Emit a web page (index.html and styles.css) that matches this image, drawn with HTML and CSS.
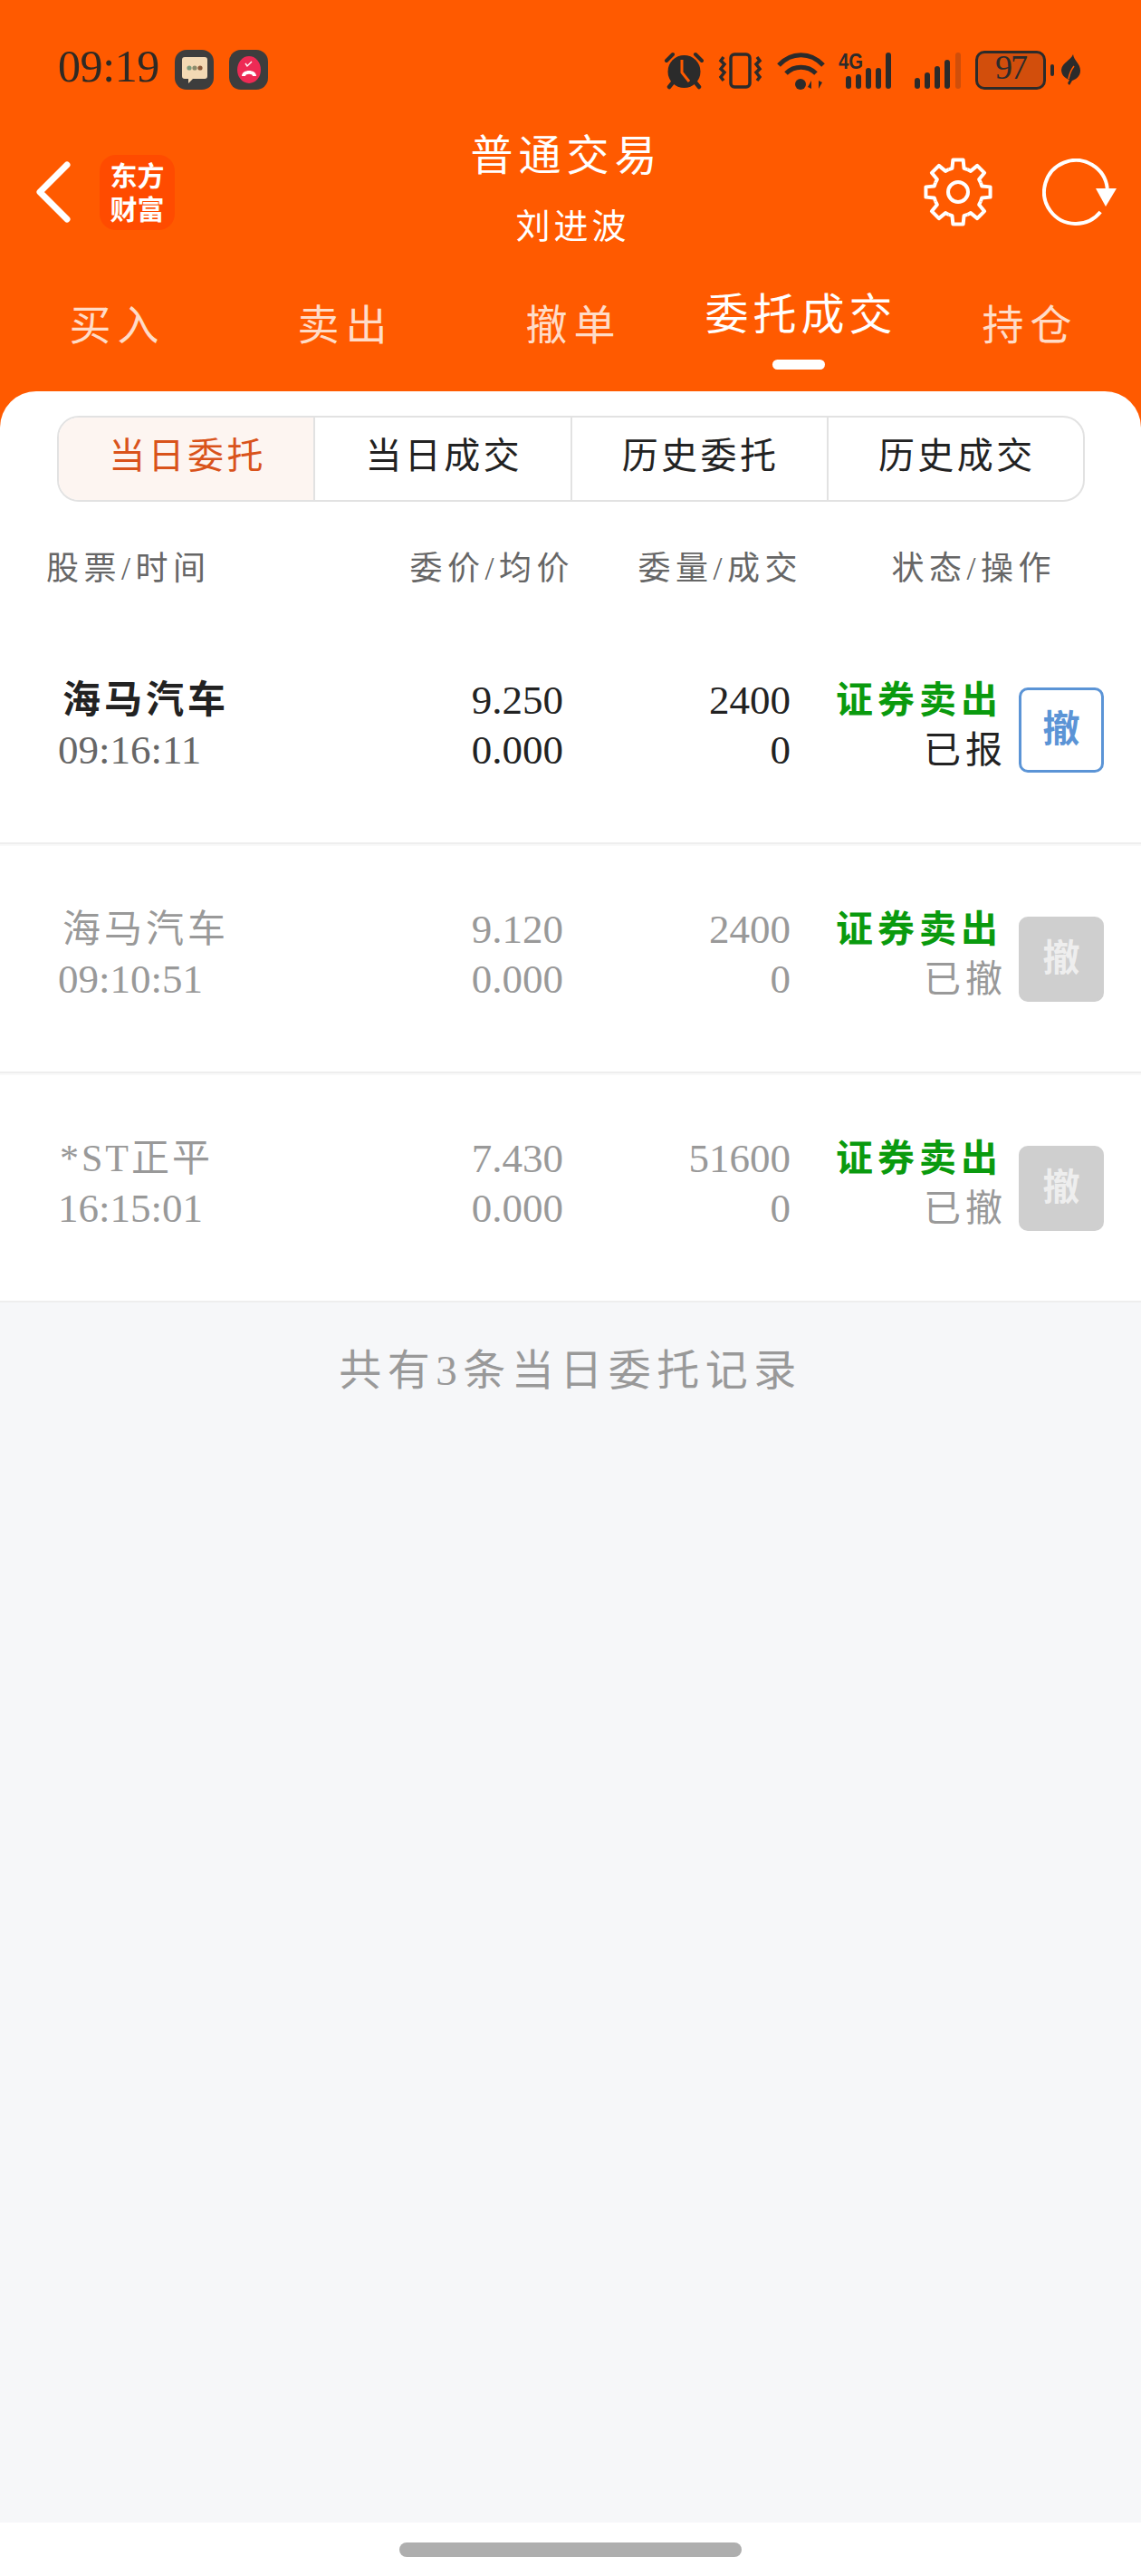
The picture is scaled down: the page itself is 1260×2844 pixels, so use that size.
FILE: index.html
```html
<!DOCTYPE html>
<html lang="zh-CN">
<head>
  <meta charset="UTF-8" />
  <meta name="viewport" content="width=device-width, initial-scale=1.0"/>
  <title>普通交易</title>
  <link rel="stylesheet" href="styles.css">
</head>
<body>

  <header class="top">
    <!-- Status bar -->
    <div class="status">
      <div class="status-left">
        <span class="clock">09:19</span>
        <span class="notice">
          <svg width="30" height="30" viewBox="0 0 30 30"><path d="M4 1h22a3 3 0 0 1 3 3v18a3 3 0 0 1-3 3H13l-5 5v-5H4a3 3 0 0 1-3-3V4a3 3 0 0 1 3-3z" fill="#f3d9b4"/><circle cx="9" cy="13" r="2.6" fill="#7d9a7b"/><circle cx="15" cy="13" r="2.6" fill="#8a8a6a"/><circle cx="21" cy="13" r="2.6" fill="#8a5a3a"/></svg>
        </span>
        <span class="notice">
          <svg width="28" height="32" viewBox="0 0 28 32"><ellipse cx="14" cy="16" rx="13" ry="15" fill="#ee2a55"/><path d="M10 9l2 3 5-5" fill="none" stroke="#fff" stroke-width="1.4"/><path d="M6 23c0-8 16-8 16 0h-4c0-3-8-3-8 0z" fill="#fff"/></svg>
        </span>
      </div>
      <div class="status-right">
        <svg width="43" height="40" viewBox="0 0 43 40"><path d="M2 9L9 2M41 9L34 2" stroke="#2b2b2b" stroke-width="4" stroke-linecap="round"/><path d="M9 33L5 38M34 33l4 5" stroke="#2b2b2b" stroke-width="4.500" stroke-linecap="round"/><circle cx="21.500" cy="21" r="18" fill="#2b2b2b"/><path d="M19 8v14l8 10" fill="none" stroke="#ff5a00" stroke-width="3"/></svg>
        <svg width="47" height="40" viewBox="0 0 47 40"><rect x="13" y="2" width="21" height="36" rx="4" fill="none" stroke="#2b2b2b" stroke-width="3.500"/><path d="M5 5l-3 4 4 4-4 5 4 4-4 5 3 4M42 5l3 4-4 4 4 5-4 4 4 5-3 4" fill="none" stroke="#2b2b2b" stroke-width="3.500"/></svg>
        <svg width="53" height="41" viewBox="0 0 53 41"><path d="M2 14c14-15 35-15 49 0" fill="none" stroke="#2b2b2b" stroke-width="5"/><path d="M10 23c9-9 24-9 33 0" fill="none" stroke="#2b2b2b" stroke-width="5"/><circle cx="26" cy="35" r="6" fill="#2b2b2b"/><path d="M38 40v-9l-4 7zM46 31v9l4-7z" fill="#2b2b2b"/></svg>
        <svg class="net" width="60" height="40" viewBox="0 0 60 40"><text x="0" y="18" class="net-text" textLength="27" lengthAdjust="spacingAndGlyphs">4G</text><rect x="8" y="26" width="6" height="14" rx="3"/><rect x="19" y="24" width="6" height="16" rx="3"/><rect x="30" y="17" width="6" height="23" rx="3"/><rect x="41" y="17" width="6" height="23" rx="3"/><rect x="52" y="0" width="6" height="40" rx="3"/></svg>
        <svg class="net signal" width="51" height="40" viewBox="0 0 51 40"><rect x="0" y="28" width="6" height="12" rx="3"/><rect x="11" y="22" width="6" height="18" rx="3"/><rect x="22" y="15" width="6" height="25" rx="3"/><rect x="33" y="8" width="6" height="32" rx="3"/><rect x="45" y="0" width="6" height="40" rx="3" fill="#d04e0a"/></svg>
        <div class="battery"><span class="battery-level">97</span><span class="battery-tip"></span></div>
        <svg width="21" height="34" viewBox="0 0 21 34"><path d="M13 0c1 7 8 10 8 18 0 7-6 10-9 11l-3 5-2-2 2-4C3 26 0 22 0 17 1 9 10 7 13 0z" fill="#2b2b2b"/><path d="M8 27c1-6 3-10 6-14" fill="none" stroke="#ff5a00" stroke-width="1.500"/></svg>
      </div>
    </div>

    <!-- Title row -->
    <div class="nav">
      <div class="nav-left">
        <svg width="38" height="68" viewBox="0 0 38 68"><path d="M34 4L4 34l30 30" fill="none" stroke="#fff" stroke-width="7" stroke-linecap="round" stroke-linejoin="round"/></svg>
        <div class="logo">东方<br>财富</div>
      </div>
      <div class="nav-title">
        <h1>普通交易</h1>
        <p>刘进波</p>
      </div>
      <div class="nav-right">
        <svg width="78" height="78" viewBox="-39 -39 78 78">
          <defs><polyline id="tooth" points="-10.33,-24.94 -6.53,-26.2 -5.63,-35.56 5.63,-35.56 6.53,-26.2 10.33,-24.94"/></defs>
          <g fill="none" stroke="#fff" stroke-width="4" stroke-linejoin="round">
            <use href="#tooth"/>
            <use href="#tooth" transform="rotate(45)"/>
            <use href="#tooth" transform="rotate(90)"/>
            <use href="#tooth" transform="rotate(135)"/>
            <use href="#tooth" transform="rotate(180)"/>
            <use href="#tooth" transform="rotate(225)"/>
            <use href="#tooth" transform="rotate(270)"/>
            <use href="#tooth" transform="rotate(315)"/>
            <circle r="11"/>
          </g>
        </svg>
        <svg width="82" height="74" viewBox="0 0 82 74"><path d="M71.800 33A35 35 0 1 0 64.200 59" fill="none" stroke="#fff" stroke-width="4"/><path d="M59 33h23L70 53z" fill="#fff"/></svg>
      </div>
    </div>

    <!-- Trade tabs -->
    <nav class="trade-tabs">
      <a>买入</a>
      <a>卖出</a>
      <a>撤单</a>
      <a class="active">委托成交<span class="active-bar"></span></a>
      <a>持仓</a>
    </nav>
  </header>

  <main class="card">
    <div class="segments">
      <a class="active">当日委托</a>
      <a>当日成交</a>
      <a>历史委托</a>
      <a>历史成交</a>
    </div>

    <div class="columns">
      <span>股票/时间</span>
      <span>委价/均价</span>
      <span>委量/成交</span>
      <span>状态/操作</span>
    </div>

    <div class="order">
      <div class="stock"><b>海马汽车</b><span>09:16:11</span></div>
      <div class="num"><span>9.250</span><span>0.000</span></div>
      <div class="num"><span>2400</span><span>0</span></div>
      <div class="state"><span class="sell">证券卖出</span><span>已报</span></div>
      <button class="cancel">撤</button>
    </div>

    <div class="order done">
      <div class="stock"><b>海马汽车</b><span>09:10:51</span></div>
      <div class="num"><span>9.120</span><span>0.000</span></div>
      <div class="num"><span>2400</span><span>0</span></div>
      <div class="state"><span class="sell">证券卖出</span><span>已撤</span></div>
      <button class="cancel">撤</button>
    </div>

    <div class="order done">
      <div class="stock"><b class="st">*ST正平</b><span>16:15:01</span></div>
      <div class="num"><span>7.430</span><span>0.000</span></div>
      <div class="num"><span>51600</span><span>0</span></div>
      <div class="state"><span class="sell">证券卖出</span><span>已撤</span></div>
      <button class="cancel">撤</button>
    </div>
  </main>

  <section class="summary">共有3条当日委托记录</section>

  <footer class="home"><span class="home-bar"></span></footer>

</body>
</html>
```

FILE: styles.css
```css
/* Reset and base */
* { margin: 0; padding: 0; box-sizing: border-box; }
body {
  width: 1260px;
  height: 2844px;
  display: flex;
  flex-direction: column;
  font-family: "Liberation Serif", "Noto Sans CJK SC", serif;
  background: #fff;
  color: #222;
}

/* Orange header */
.top {
  height: 472px;
  flex: none;
  background: #ff5a00;
  color: #fff;
}

/* Status bar */
.status {
  height: 116px;
  padding: 55px 67px 0 64px;
  display: flex;
  justify-content: space-between;
  align-items: flex-start;
}
.status-left {
  display: flex;
  align-items: flex-start;
}
.clock {
  font-size: 50px;
  line-height: 44px;
  letter-spacing: -0.4px;
  color: #2f2a24;
  width: 129px;
  margin-top: -4px;
}
.notice {
  width: 43px;
  height: 44px;
  margin-right: 17px;
  background: #3d3d3d;
  border-radius: 13px;
  display: flex;
  align-items: center;
  justify-content: center;
}
.status-right {
  display: flex;
  align-items: flex-start;
  margin-top: 3px;
}
.status-right svg { display: block; flex: none; overflow: visible; }
.status-right svg:nth-child(1) { margin-right: 17px; }
.status-right svg:nth-child(2) { margin-right: 17px; }
.status-right svg:nth-child(3) { margin-right: 15px; }
.status-right svg:nth-child(4) { margin-right: 24px; }
.status-right svg:nth-child(5) { margin-right: 16px; }
.status-right svg:nth-child(7) { margin: 2px 0 0 8px; }
.net rect { fill: #2b2b2b; }
.net .net-text { font: bold 23px "Liberation Sans", sans-serif; fill: #2b2b2b; }
.signal rect:last-child { fill: #d04e0a; }

.battery {
  width: 87px;
  height: 43px;
  margin-top: -2px;
  display: flex;
  align-items: center;
}
.battery-level {
  width: 78px;
  height: 43px;
  border: 3.5px solid #2b2b2b;
  border-radius: 10px;
  background: #d24e0c;
  color: #2b2b2b;
  font-size: 38px;
  line-height: 30px;
  letter-spacing: -2px;
  text-align: center;
}
.battery-tip {
  width: 4px;
  height: 13px;
  margin-left: 5px;
  background: #2b2b2b;
  border-radius: 2px;
}

/* Title row */
.nav {
  height: 202px;
  padding: 0 27px 0 40px;
  display: grid;
  grid-template-columns: 1fr auto 1fr;
}
.nav-left {
  display: flex;
  align-items: center;
  gap: 32px;
  height: 192px;
}
.logo {
  width: 83px;
  height: 83px;
  background: #ff4b00;
  border-radius: 18px;
  font-size: 30px;
  font-weight: bold;
  line-height: 37px;
  text-align: center;
  padding-top: 5px;
}
.nav-title { text-align: center; padding-top: 24px; }
.nav-title h1 {
  font-size: 47px;
  font-weight: normal;
  line-height: 64px;
  letter-spacing: 6px;
  padding-right: 22px;
}
.nav-title p {
  font-size: 38px;
  line-height: 56px;
  letter-spacing: 4px;
  margin-top: 18px;
  padding-right: 8px;
}
.nav-right {
  display: flex;
  justify-content: flex-end;
  align-items: center;
  gap: 54px;
  height: 192px;
}

/* Trade tabs */
.trade-tabs {
  display: flex;
  align-items: flex-start;
}
.trade-tabs a {
  flex: 1;
  text-align: center;
  font-size: 46px;
  line-height: 60px;
  letter-spacing: 7px;
  text-indent: 7px;
  margin-top: 12px;
  color: #ffdcc8;
}
.trade-tabs a.active {
  margin-top: 0;
  font-size: 48px;
  letter-spacing: 5px;
  text-indent: 5px;
  color: #fff;
}
.active-bar {
  display: block;
  width: 58px;
  height: 11px;
  margin: 19px auto 0;
  background: #fff;
  border-radius: 6px;
}

/* White card */
.card {
  margin-top: -40px;
  flex: none;
  background: #fff;
  border-radius: 40px 40px 0 0;
  padding-top: 27px;
}
.segments {
  display: flex;
  height: 95px;
  margin: 0 62px 0 63px;
  border: 2px solid #e2e2e2;
  border-radius: 24px;
  overflow: hidden;
}
.segments a {
  flex: 1;
  font-size: 40px;
  line-height: 86px;
  letter-spacing: 3.5px;
  text-indent: 3px;
  text-align: center;
  border-left: 2px solid #e2e2e2;
}
.segments a:first-child { border-left: none; }
.segments a.active {
  background: #fdf5f1;
  color: #d9531b;
}

/* Column labels */
.columns {
  display: grid;
  grid-template-columns: 283px 300px 252px 280px;
  height: 50px;
  margin: 49px 0 26px;
  padding-left: 51px;
  font-size: 36px;
  line-height: 50px;
  letter-spacing: 5.5px;
  color: #666;
}
.columns span { text-align: right; }
.columns span:first-child { text-align: left; }

/* Order rows */
.order {
  display: grid;
  grid-template-columns: 358px 200px 251px 234px 94px;
  align-items: center;
  height: 253px;
  padding: 0 41px 0 64px;
  border-bottom: 2px solid #eee;
}
.order + .order { box-shadow: inset 0 2px 0 #f9f9f9; }
.stock, .num, .state {
  display: flex;
  flex-direction: column;
  margin-bottom: 8px;
  line-height: 55px;
  font-size: 45px;
}
.stock b {
  font-size: 42px;
  letter-spacing: 4px;
  padding-left: 5px;
}
.stock b.st { font-weight: normal; letter-spacing: 3px; padding-left: 2px; }
.stock span { color: #666; }
.num { text-align: right; }
.state { text-align: right; font-size: 41px; letter-spacing: 5px; }
.state span:last-child { margin-right: -5px; }
.sell { color: #0a9a0e; font-weight: bold; }
.cancel {
  width: 94px;
  height: 94px;
  margin: 3px 0 0 18px;
  border: 3px solid #5b94d6;
  border-radius: 10px;
  background: #fff;
  color: #5b94d6;
  font-family: inherit;
  font-size: 41px;
  font-weight: bold;
  padding-bottom: 10px;
}

/* Cancelled rows are greyed out */
.done .stock b, .done .stock span, .done .num, .done .state span:last-child {
  color: #999;
  font-weight: normal;
}
.done .cancel {
  background: #cfcfcf;
  border-color: #cfcfcf;
  color: #eee;
}

/* Footer */
.summary {
  flex: 1;
  background: #f6f7f9;
  color: #999;
  text-align: center;
  font-size: 47px;
  line-height: 60px;
  letter-spacing: 6.500px;
  padding-top: 45px;
}
.home {
  height: 59px;
  flex: none;
  padding-top: 22px;
  background: #fff;
}
.home-bar {
  display: block;
  width: 378px;
  height: 16px;
  margin: 0 auto;
  background: #aeaeae;
  border-radius: 8px;
}
```
